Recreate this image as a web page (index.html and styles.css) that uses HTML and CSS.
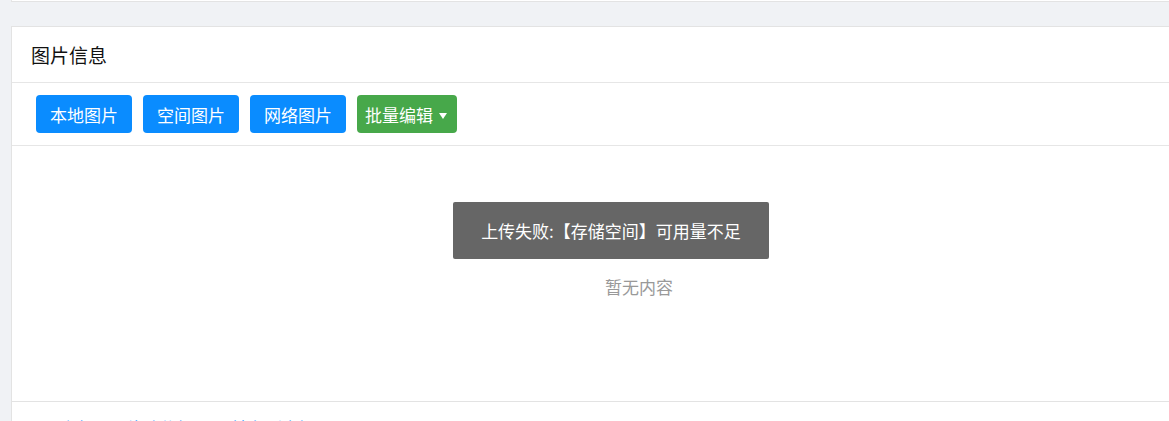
FILE: index.html
```html
<!DOCTYPE html>
<html lang="zh-CN">
<head>
    <meta charset="UTF-8">
    <title>图片信息</title>
    <link rel="stylesheet" href="styles.css">
</head>
<body>
    <div class="top-card"></div>

    <div class="card">
        <div class="card-header">图片信息</div>
        <div class="toolbar">
            <button class="btn btn-blue">本地图片</button>
            <button class="btn btn-blue">空间图片</button>
            <button class="btn btn-blue">网络图片</button>
            <button class="btn btn-green">批量编辑<span class="caret"></span></button>
        </div>
        <div class="card-body">
            <p class="empty">暂无内容</p>
        </div>
        <div class="card-footer">
            <a href="#">删除</a>
            <a href="#">移动分组</a>
            <a href="#">转存到空间</a>
        </div>
    </div>

    <div class="toast">上传失败:【存储空间】可用量不足</div>
</body>
</html>
```

FILE: styles.css
```css
html, body {
    margin: 0;
    padding: 0;
    height: 100%;
    overflow: hidden;
}
body {
    font-family: "Noto Sans CJK SC", "Microsoft YaHei", sans-serif;
    background-color: #f0f2f5;
    padding-left: 11px;
    color: #222;
}
.top-card {
    height: 1px;
    background-color: white;
    border-left: 1px solid #e6e6e6;
    border-bottom: 1px solid #e3e3e3;
    width: 1300px;
}
.card {
    margin-top: 24px;
    width: 1254px;
    background-color: white;
    border-left: 1px solid #e3e3e3;
    border-top: 1px solid #e3e3e3;
}
.card-header {
    height: 55px;
    line-height: 55px;
    padding-left: 19px;
    font-size: 19px;
    color: #111;
    border-bottom: 1px solid #e6e6e6;
}
.toolbar {
    display: flex;
    gap: 11px;
    padding: 12px 24px;
    height: 38px;
    border-bottom: 1px solid #e6e6e6;
}
.btn {
    font-family: inherit;
    font-size: 17px;
    color: white;
    border: none;
    border-radius: 4px;
    height: 38px;
    width: 96px;
    padding: 0;
    cursor: pointer;
}
.btn-blue {
    background-color: #0a8cff;
}
.btn-green {
    background-color: #47a84a;
    width: 100px;
    text-align: left;
    padding-left: 8px;
}
.caret {
    display: inline-block;
    width: 0;
    height: 0;
    border-left: 4px solid transparent;
    border-right: 4px solid transparent;
    border-top: 6px solid white;
    vertical-align: 3px;
    margin-left: 6px;
}
.card-body {
    height: 255px;
    border-bottom: 1px solid #e3e3e3;
    display: flex;
    justify-content: center;
}
.empty {
    margin: 129px 0 0;
    font-size: 17px;
    line-height: 24px;
    color: #999;
}
.card-footer {
    display: flex;
    gap: 38px;
    padding: 13px 0 0 41px;
    font-size: 17px;
}
.card-footer a {
    color: #0a8cff;
    text-decoration: none;
}
.toast {
    position: absolute;
    left: 453px;
    top: 202px;
    width: 316px;
    height: 57px;
    line-height: 57px;
    text-align: center;
    background-color: #666;
    color: white;
    font-size: 17px;
    border-radius: 2px;
}
```
